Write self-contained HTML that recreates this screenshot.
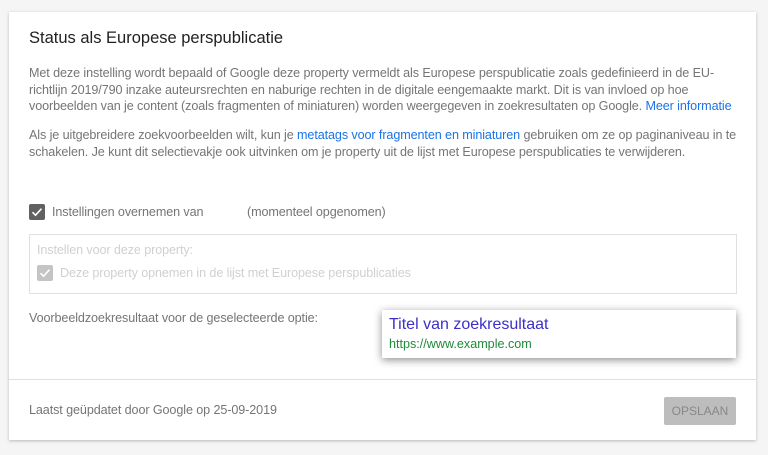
<!DOCTYPE html>
<html><head><style>
body{margin:0;width:768px;height:455px;background:#f5f5f5;font-family:"Liberation Sans",sans-serif;position:relative;overflow:hidden}
.card{position:absolute;left:9px;top:12px;width:747px;height:428px;background:#fff;box-shadow:0 1px 3px rgba(0,0,0,.25)}
.a{position:absolute;white-space:nowrap}
.p{color:#757575;font-size:12.6px;line-height:16.5px;letter-spacing:-0.1px}
a{color:#1a73e8;text-decoration:none}
.cb{position:absolute;width:16px;height:16px;border-radius:2px;background:#616161}
.cb svg{position:absolute;left:2px;top:2px}
</style></head><body>
<div class="card">
<div class="a" style="left:20px;top:17px;font-size:16.5px;color:#212121">Status als Europese perspublicatie</div>
<div class="a p" style="left:20px;top:53px">Met deze instelling wordt bepaald of Google deze property vermeldt als Europese perspublicatie zoals gedefinieerd in de EU-<br>richtlijn 2019/790 inzake auteursrechten en naburige rechten in de digitale eengemaakte markt. Dit is van invloed op hoe<br>voorbeelden van je content (zoals fragmenten of miniaturen) worden weergegeven in zoekresultaten op Google. <a>Meer informatie</a></div>
<div class="a p" style="left:20px;top:115px">Als je uitgebreidere zoekvoorbeelden wilt, kun je <a>metatags voor fragmenten en miniaturen</a> gebruiken om ze op paginaniveau in te<br>schakelen. Je kunt dit selectievakje ook uitvinken om je property uit de lijst met Europese perspublicaties te verwijderen.</div>
<div class="cb" style="left:20px;top:192px"><svg width="12" height="12" viewBox="0 0 12 12"><path d="M1.5 6.2l3 3 6-6.5" stroke="#fff" stroke-width="1.6" fill="none"/></svg></div>
<div class="a p" style="left:43px;top:192px">Instellingen overnemen van</div>
<div class="a p" style="left:238px;top:192px">(momenteel opgenomen)</div>
<div class="a" style="left:20px;top:222px;width:706px;height:58px;border:1px solid #e0e0e0"></div>
<div class="a p" style="left:28px;top:230px;color:#d0d0d0">Instellen voor deze property:</div>
<div class="cb" style="left:28px;top:253px;background:#c4c4c4"><svg width="12" height="12" viewBox="0 0 12 12"><path d="M1.5 6.2l3 3 6-6.5" stroke="#fff" stroke-width="1.6" fill="none"/></svg></div>
<div class="a p" style="left:51px;top:253px;color:#d0d0d0">Deze property opnemen in de lijst met Europese perspublicaties</div>
<div class="a p" style="left:20px;top:298px">Voorbeeldzoekresultaat voor de geselecteerde optie:</div>
<div class="a" style="left:373px;top:298px;width:354px;height:48px;background:#fff;box-shadow:0 2px 8px rgba(0,0,0,.45)"></div>
<div class="a" style="left:380px;top:304px;font-size:16px;color:#3c2fc8">Titel van zoekresultaat</div>
<div class="a" style="left:380px;top:325px;font-size:12.6px;color:#1e8a3a">https://www.example.com</div>
<div class="a" style="left:0;top:367px;width:747px;border-top:1px solid #e0e0e0"></div>
<div class="a p" style="left:20px;top:390px">Laatst geüpdatet door Google op 25-09-2019</div>
<div class="a" style="left:655px;top:385px;width:72px;height:28px;background:#bdbdbd;border-radius:2px;color:#888;font-size:12px;text-align:center;line-height:28px">OPSLAAN</div>
</div>
</body></html>
